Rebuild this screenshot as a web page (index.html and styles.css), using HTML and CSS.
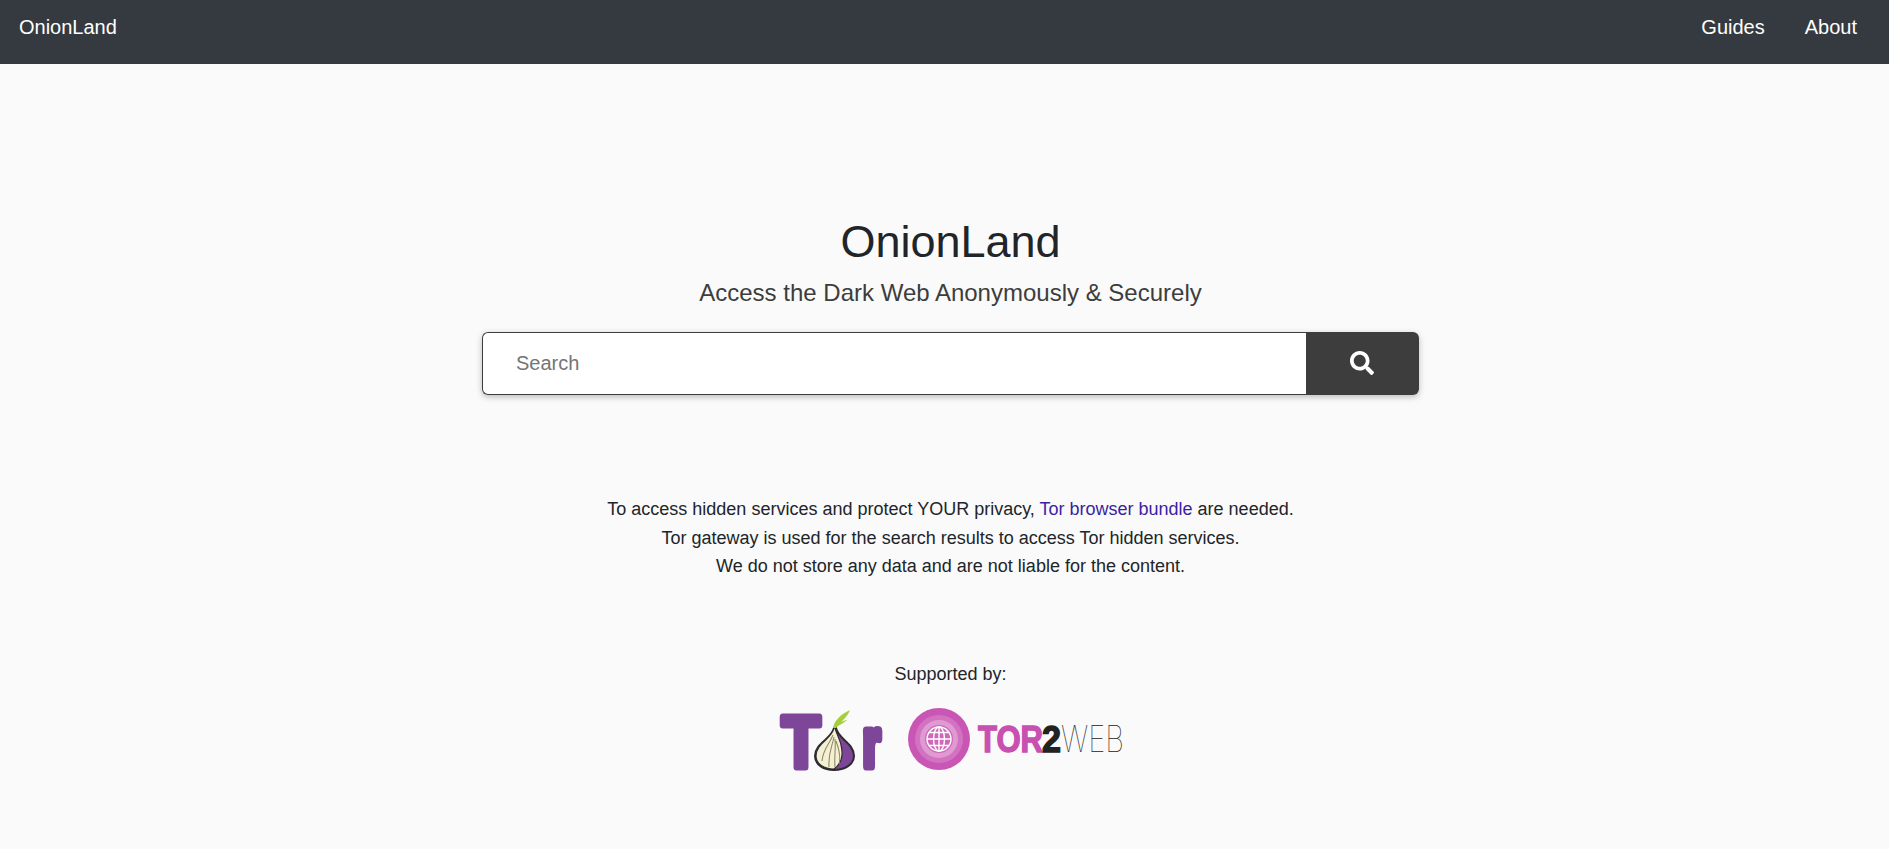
FILE: index.html
```html
<!DOCTYPE html>
<html>
<head>
    <title>OnionLand</title>
    <link rel="stylesheet" href="styles.css">
</head>
<body>
    <nav class="navbar">
        <a class="brand" href="#">OnionLand</a>
        <div class="nav-links">
            <a href="#">Guides</a>
            <a href="#">About</a>
        </div>
    </nav>

    <main class="container">
        <h1>OnionLand</h1>
        <h2>Access the Dark Web Anonymously &amp; Securely</h2>

        <form class="search-form">
            <input type="text" class="search-input" placeholder="Search">
            <button type="button" class="search-button">
                <svg class="search-icon" viewBox="0 0 512 512">
                    <path fill="#fff" d="M505 442.7L405.3 343c-4.5-4.5-10.6-7-17-7H372c27.6-35.3 44-79.7 44-128C416 93.1 322.9 0 208 0S0 93.1 0 208s93.1 208 208 208c48.3 0 92.7-16.4 128-44v16.3c0 6.4 2.5 12.5 7 17l99.7 99.7c9.4 9.4 24.6 9.4 33.9 0l28.3-28.3c9.4-9.4 9.4-24.6.1-34zM208 336c-70.7 0-128-57.2-128-128 0-70.7 57.2-128 128-128 70.7 0 128 57.2 128 128 0 70.7-57.2 128-128 128z"/>
                </svg>
            </button>
        </form>

        <div class="notice">
            <p>To access hidden services and protect YOUR privacy, <a href="#">Tor browser bundle</a> are needed.</p>
            <p>Tor gateway is used for the search results to access Tor hidden services.</p>
            <p>We do not store any data and are not liable for the content.</p>
        </div>

        <p class="supported">Supported by:</p>
        <div class="logos">
            <svg class="logo-tor" viewBox="0 0 110 66">
                <text class="tor-t" x="6" y="60" textLength="38" lengthAdjust="spacingAndGlyphs">T</text>
                <text class="tor-r" x="87" y="58.500" textLength="17" lengthAdjust="spacingAndGlyphs">r</text>
                <path d="M58 21C56 32 39 36 39 49C39 58 48 63 58 63C68 63 78 58 78 49C78 36 62 32 60 21Z" fill="#7d4698" stroke="#2e2a2e" stroke-width="2"/>
                <path d="M58 21C56 32 40 36 40 49C40 57 48 62 58 62C65 57 68 50 65 38C64 33 61 28 59 21Z" fill="#f4f0d2" stroke="#2e2a2e" stroke-width="1.2"/>
                <path d="M57 28C53 38 47 42 46 54M58 30C56 40 52 46 53 60M59 32C60 42 58 50 59 60M60 34C63 42 65 50 63 57" fill="none" stroke="#8f8b6c" stroke-width="1.1"/>
                <path d="M57 21C58 14 65 7 74 3C71 10 68 12 65 15C67 14 69 13 71 13C67 17 62 18 60 21Z" fill="#a3cf3a"/>
            </svg>
            <svg class="logo-t2w" viewBox="0 0 220 66">
                <circle cx="33" cy="32" r="31" fill="#c955b4"/>
                <circle cx="33" cy="32" r="24" fill="#d272c0"/>
                <circle cx="33" cy="32" r="19" fill="#e09ad2"/>
                <circle cx="33" cy="32" r="14" fill="#cf68bb"/>
                <g fill="none" stroke="#fff" stroke-width="1.4">
                    <circle cx="33" cy="32" r="12"/>
                    <ellipse cx="33" cy="32" rx="5.500" ry="12"/>
                    <path d="M33 20V44M21 32H45M23 25.500H43M23 38.500H43"/>
                </g>
                <text class="t2w-bold" x="72" y="45" textLength="65" lengthAdjust="spacingAndGlyphs">TOR</text>
                <text class="t2w-two" x="136" y="45" textLength="19" lengthAdjust="spacingAndGlyphs">2</text>
                <text class="t2w-thin" x="155" y="45" textLength="63" lengthAdjust="spacingAndGlyphs">WEB</text>
            </svg>
        </div>
    </main>
</body>
</html>
```

FILE: styles.css
```css
* {
    box-sizing: border-box;
}

body {
    margin: 0;
    font-family: "Liberation Sans", Arial, sans-serif;
    background-color: #fafafa;
    color: #212529;
}

.navbar {
    display: flex;
    justify-content: space-between;
    align-items: center;
    height: 64px;
    padding: 0 32px 10px 19px;
    background-color: #343a40;
}

.navbar a {
    color: #fff;
    text-decoration: none;
    font-size: 20px;
}

.nav-links {
    display: flex;
    gap: 40px;
}

.container {
    display: flex;
    flex-direction: column;
    align-items: center;
    padding: 151px 0 0 12px;
}

h1 {
    margin: 0;
    font-size: 45px;
    font-weight: 400;
    line-height: 54px;
}

h2 {
    margin: 9px 0 0;
    font-size: 24px;
    font-weight: 400;
    line-height: 29px;
    color: #3d3d3d;
}

.search-form {
    display: flex;
    width: 937px;
    height: 63px;
    margin-top: 25px;
    border-radius: 6px;
    box-shadow: 0 2px 6px rgba(0, 0, 0, 0.25);
}

.search-input {
    flex: 1;
    padding: 0 33px;
    border: 1px solid #3d3d3d;
    border-right: none;
    border-radius: 6px 0 0 6px;
    background-color: #fff;
    font-family: inherit;
    font-size: 20px;
    outline: none;
}

.search-input::placeholder {
    color: #757575;
}

.search-button {
    display: flex;
    justify-content: center;
    align-items: center;
    width: 113px;
    border: none;
    border-radius: 0 6px 6px 0;
    background-color: #3d3d3d;
}

.search-icon {
    width: 24px;
    height: 24px;
    margin: 0 2px 2px 0;
}

.notice {
    margin-top: 100px;
    text-align: center;
    font-size: 18px;
    line-height: 28.6px;
}

.notice p {
    margin: 0;
}

.notice a {
    color: #3b1fa3;
    text-decoration: none;
}

.supported {
    margin: 79px 0 0;
    font-size: 18px;
    line-height: 28px;
}

.logos {
    display: flex;
    gap: 20px;
    margin-top: 19px;
}

.logo-tor {
    width: 110px;
    height: 66px;
    overflow: visible;
}

.logo-t2w {
    width: 220px;
    height: 66px;
    overflow: visible;
}

.tor-t,
.tor-r {
    font-family: "Liberation Sans", sans-serif;
    font-weight: 700;
    fill: #7d4698;
    stroke: #7d4698;
    stroke-linejoin: round;
}

.tor-t {
    font-size: 73px;
    stroke-width: 7;
}

.tor-r {
    font-size: 66px;
    stroke-width: 9;
}

.t2w-bold,
.t2w-two {
    font-family: "Liberation Sans", sans-serif;
    font-size: 36px;
    font-weight: 700;
    stroke-width: 1.4;
}

.t2w-bold {
    fill: #c850b0;
    stroke: #c850b0;
}

.t2w-two {
    fill: #222;
    stroke: #222;
}

.t2w-thin {
    font-family: Inter, sans-serif;
    font-size: 36px;
    font-weight: 100;
    fill: #222;
}
```
